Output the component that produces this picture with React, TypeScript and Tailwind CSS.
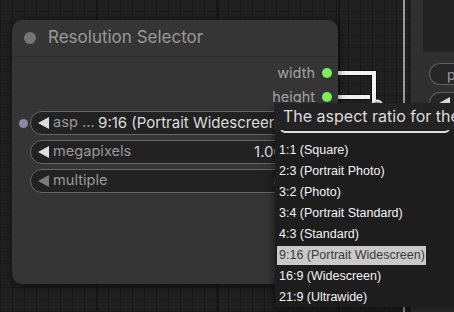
import React from "react";

const options = [
  "1:1 (Square)",
  "2:3 (Portrait Photo)",
  "3:2 (Photo)",
  "3:4 (Portrait Standard)",
  "4:3 (Standard)",
  "9:16 (Portrait Widescreen)",
  "16:9 (Widescreen)",
  "21:9 (Ultrawide)",
];

const Arrow = ({ dir = "left", color }: { dir?: "left" | "right"; color: string }) => (
  <svg width="11" height="12" viewBox="0 0 11 12" className="shrink-0">
    <polygon points={dir === "left" ? "11,0 11,12 0,6" : "0,0 0,12 11,6"} fill={color} />
  </svg>
);

const Output = ({ label }: { label: string }) => (
  <div className="flex h-[24px] items-center justify-end">
    <span className="text-[14.5px] text-[#a3a3a3]">{label}</span>
    <span className="ml-[7px] mr-[6px] h-[10px] w-[10px] rounded-full bg-[#7cf05e]" />
  </div>
);

const Widget = ({
  label,
  value,
  slot,
  dim,
}: {
  label: string;
  value: string;
  slot?: boolean;
  dim?: boolean;
}) => (
  <div className="flex h-[24px] items-center">
    <div className="flex w-[18px] items-center justify-center pl-[4px]">
      {slot && <span className="h-[9px] w-[9px] rounded-full bg-[#8a88a6]" />}
    </div>
    <div className="mr-[18px] flex h-full flex-1 items-center overflow-hidden rounded-full border border-[#666] bg-[#222] pl-[7px] pr-[7px]">
      <Arrow color={dim ? "#7a7a7a" : "#dddddd"} />
      <span className="ml-[4px] shrink-0 whitespace-nowrap text-[14.6px] text-[#999]">{label}</span>
      <span className="flex-1" />
      <span className="whitespace-nowrap text-[15px] text-[#dddddd]">{value}</span>
      <span className="ml-[18px]">
        <Arrow dir="right" color={dim ? "#7a7a7a" : "#dddddd"} />
      </span>
    </div>
  </div>
);

export default function App() {
  return (
    <div className="relative h-[312px] w-[454px] overflow-hidden bg-[#202020] font-[Inter,sans-serif] [background-image:linear-gradient(to_right,#161616_2px,transparent_2px),linear-gradient(to_right,#181818_1px,transparent_1px),linear-gradient(to_bottom,#181818_1px,transparent_1px)] [background-position:96px_0,0_0,0_11px] [background-size:121px_100%,12px_12px,12px_12px]">
      {/* right-hand node, partly off canvas */}
      <div className="absolute left-[403px] top-0 h-[312px] w-[2px] bg-[#9a9a9a]" />
      <div className="absolute left-[411px] top-[-20px] flex h-[340px] w-[60px] flex-col rounded-[8px] bg-[#303030] pl-[12px]">
        <div className="h-[72px] bg-[#232323]" />
        <div className="ml-[6px] mt-[11px] flex h-[22px] items-center rounded-l-full border border-r-0 border-[#5e5e5e] bg-[#262626] pl-[17px] text-[14px] text-[#999]">
          p
        </div>
        <div className="ml-[6px] mt-[7px] flex h-[22px] items-center rounded-l-full border border-r-0 border-[#5e5e5e] bg-[#262626] pl-[9px]">
          <Arrow color="#dddddd" />
        </div>
      </div>

      {/* links */}
      <svg className="absolute left-0 top-0" width="454" height="312">
        <path d="M330 73 H374 V130" fill="none" stroke="#111" strokeWidth="6" />
        <path d="M330 97 H370" fill="none" stroke="#111" strokeWidth="6" />
        <path d="M330 73 H374 V130" fill="none" stroke="#f2f2f2" strokeWidth="4" />
        <path d="M330 97 H370" fill="none" stroke="#f2f2f2" strokeWidth="4" />
        <circle cx="377" cy="106" r="5.5" fill="#9a9a9a" stroke="#eeeeee" strokeWidth="2" />
      </svg>

      {/* Resolution Selector node */}
      <div className="absolute left-[12px] top-[20px] flex h-[264px] w-[326px] flex-col rounded-[10px] bg-[#353535] shadow-[0_2px_8px_rgba(0,0,0,0.55)]">
        <div className="flex h-[37px] shrink-0 items-center border-b border-[#2b2b2b]">
          <span className="ml-[12px] h-[12px] w-[12px] rounded-full bg-[#747474]" />
          <span className="ml-[12px] text-[17px] text-[#9a9a9a]">Resolution Selector</span>
        </div>
        <div className="mt-[4px] flex flex-col">
          <Output label="width" />
          <Output label="height" />
        </div>
        <div className="mt-[2px] flex flex-col gap-[5px]">
          <Widget label="asp …" value="9:16 (Portrait Widescreen)" slot />
          <Widget label="megapixels" value="1.00" />
          <Widget label="multiple" value="8" dim />
        </div>
      </div>

      {/* combo dropdown */}
      <div className="absolute left-[275px] top-[108px] flex h-[199px] w-[190px] flex-col bg-[#1d1d1d] font-['Liberation_Sans',Arial,sans-serif] shadow-[0_2px_10px_rgba(0,0,0,0.6)]">
        <div className="ml-[5px] mt-[3px] h-[22px] w-[170px] shrink-0 rounded-[5px] border-2 border-[#dddddd]" />
        <div className="mt-[8px] flex flex-col">
          {options.map((o) => (
            <div
              key={o}
              className={
                o.startsWith("9:16")
                  ? "mb-[2px] ml-[2px] h-[19px] w-[149px] whitespace-nowrap bg-[#c9c9c9] pl-[2px] text-[12.5px] leading-[19px] text-[#3a3a3a]"
                  : "mb-[2px] ml-[2px] h-[19px] w-[149px] whitespace-nowrap pl-[2px] text-[12.5px] leading-[19px] text-[#f4f4f4]"
              }
            >
              {o}
            </div>
          ))}
        </div>
      </div>

      {/* tooltip */}
      <div className="absolute left-[274px] top-[103px] h-[27px] w-[200px] whitespace-nowrap bg-[#232323] pl-[9px] text-[16px] leading-[27px] text-[#dddddd]">
        The aspect ratio for the width and height
      </div>
    </div>
  );
}
